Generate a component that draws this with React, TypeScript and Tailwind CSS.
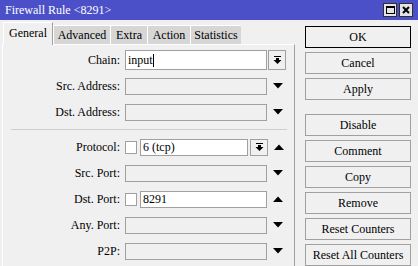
import React from "react";

const DropBtn = ({ h }: { h: number }) => (
  <div
    className="flex items-center justify-center border border-[#a0a0a0] bg-[#f0f0f0] shrink-0"
    style={{ width: 18, height: h }}
  >
    <svg width="9" height="10" viewBox="0 0 9 10">
      <rect x="1" y="1" width="7" height="1" fill="#000" />
      <rect x="3" y="3" width="3" height="2" fill="#000" />
      <polygon points="0.5,5 8.5,5 4.5,9" fill="#000" />
    </svg>
  </div>
);

const Tri = ({ up }: { up?: boolean }) => (
  <div className="w-[20px] ml-[1px] flex items-center justify-center shrink-0">
    <svg width="10" height="6" viewBox="0 0 10 6">
      {up ? (
        <polygon points="0,6 10,6 5,0.5" fill="#000" />
      ) : (
        <polygon points="0,0 10,0 5,5.5" fill="#000" />
      )}
    </svg>
  </div>
);

const Label = ({ children }: { children: React.ReactNode }) => (
  <div className="w-[117px] text-right shrink-0 leading-none">{children}</div>
);

const Disabled = () => (
  <div className="w-[142px] h-[17px] border border-[#a0a0a0] bg-[#f0f0f0] shrink-0" />
);

const Check = () => (
  <div className="w-[12px] h-[13px] border border-[#a0a0a0] bg-white shrink-0" />
);

const Row = ({ children }: { children: React.ReactNode }) => (
  <div className="flex items-center h-[26px]">{children}</div>
);

const Btn = ({ children, def }: { children: React.ReactNode; def?: boolean }) => (
  <div
    className={`h-[22px] w-[106px] flex items-center justify-center bg-[#f0f0f0] border ${
      def ? "border-black" : "border-[#a0a0a0]"
    }`}
  >
    {children}
  </div>
);

export default function App() {
  const tabs = [
    { n: "Advanced", w: 57 },
    { n: "Extra", w: 37 },
    { n: "Action", w: 43 },
    { n: "Statistics", w: 51 },
  ];
  return (
    <div className="w-[418px] h-[266px] overflow-hidden bg-[#f0f0f0] flex flex-col font-[family-name:Liberation_Serif,serif] text-[12px] text-black">
      {/* title bar */}
      <div className="h-[20px] bg-[#4b50c8] flex items-center justify-between shrink-0">
        <div className="pl-[5px] text-white text-[12px] leading-none">Firewall Rule &lt;8291&gt;</div>
        <div className="flex gap-[2px] pr-[5px]">
          <div className="w-[14px] h-[14px] bg-[#e4e4e4] border border-[#303030] flex items-center justify-center">
            <div className="w-[9px] h-[8px] border border-black border-t-2" />
          </div>
          <div className="w-[14px] h-[14px] bg-[#e4e4e4] border border-[#303030] flex items-center justify-center">
            <svg width="8" height="8" viewBox="0 0 8 8">
              <path d="M1 1 L7 7 M7 1 L1 7" stroke="#000" strokeWidth="2" />
            </svg>
          </div>
        </div>
      </div>

      <div className="flex flex-1">
        {/* left */}
        <div className="w-[294px] pl-[2px] pt-[2px] flex flex-col shrink-0">
          <div className="flex items-end h-[22px] pl-[1px]">
            <div className="relative z-10 -mb-px w-[50px] h-[23px] bg-[#f0f0f0] border-l border-t border-white border-r border-r-[#a0a0a0] flex items-center justify-center pb-[2px]">
              General
            </div>
            {tabs.map((t) => (
              <div
                key={t.n}
                className="h-[19px] bg-[#d6d6d6] border-l border-t border-white flex items-center justify-center"
                style={{ width: t.w }}
              >
                {t.n}
              </div>
            ))}
          </div>
          <div className="flex-1 w-[293px] border-t border-l border-white border-r border-r-[#a0a0a0] pt-[2px] flex flex-col">
            <Row>
              <Label>Chain:</Label>
              <div className="ml-[5px] w-[142px] h-[20px] border border-[#a0a0a0] bg-white flex items-center pl-[2px] shrink-0">
                <span>input</span>
                <span className="inline-block w-px h-[13px] bg-black" />
              </div>
              <div className="ml-[1px]">
                <DropBtn h={20} />
              </div>
            </Row>
            <Row>
              <Label>Src. Address:</Label>
              <div className="ml-[5px]">
                <Disabled />
              </div>
              <Tri />
            </Row>
            <Row>
              <Label>Dst. Address:</Label>
              <div className="ml-[5px]">
                <Disabled />
              </div>
              <Tri />
            </Row>
            <div className="ml-[8px] w-[276px] h-px bg-[#cfcfcf] mt-[4px] mb-[4px]" />
            <Row>
              <Label>Protocol:</Label>
              <div className="ml-[5px] flex items-center">
                <Check />
                <div className="ml-[3px] w-[108px] h-[17px] border border-[#a0a0a0] bg-white flex items-center pl-[2px]">
                  6 (tcp)
                </div>
                <div className="ml-[2px]">
                  <DropBtn h={17} />
                </div>
              </div>
              <Tri up />
            </Row>
            <Row>
              <Label>Src. Port:</Label>
              <div className="ml-[5px]">
                <Disabled />
              </div>
              <Tri />
            </Row>
            <Row>
              <Label>Dst. Port:</Label>
              <div className="ml-[5px] flex items-center">
                <Check />
                <div className="ml-[3px] w-[127px] h-[17px] border border-[#a0a0a0] bg-white flex items-center pl-[2px]">
                  8291
                </div>
              </div>
              <Tri up />
            </Row>
            <Row>
              <Label>Any. Port:</Label>
              <div className="ml-[5px]">
                <Disabled />
              </div>
              <Tri />
            </Row>
            <Row>
              <Label>P2P:</Label>
              <div className="ml-[5px]">
                <Disabled />
              </div>
              <Tri />
            </Row>
          </div>
        </div>

        {/* right buttons */}
        <div className="ml-[11px] pt-[6px] flex flex-col gap-[4px]">
          <Btn def>OK</Btn>
          <Btn>Cancel</Btn>
          <Btn>Apply</Btn>
          <div className="h-[6px]" />
          <Btn>Disable</Btn>
          <Btn>Comment</Btn>
          <Btn>Copy</Btn>
          <Btn>Remove</Btn>
          <Btn>Reset Counters</Btn>
          <Btn>Reset All Counters</Btn>
        </div>
      </div>
    </div>
  );
}
